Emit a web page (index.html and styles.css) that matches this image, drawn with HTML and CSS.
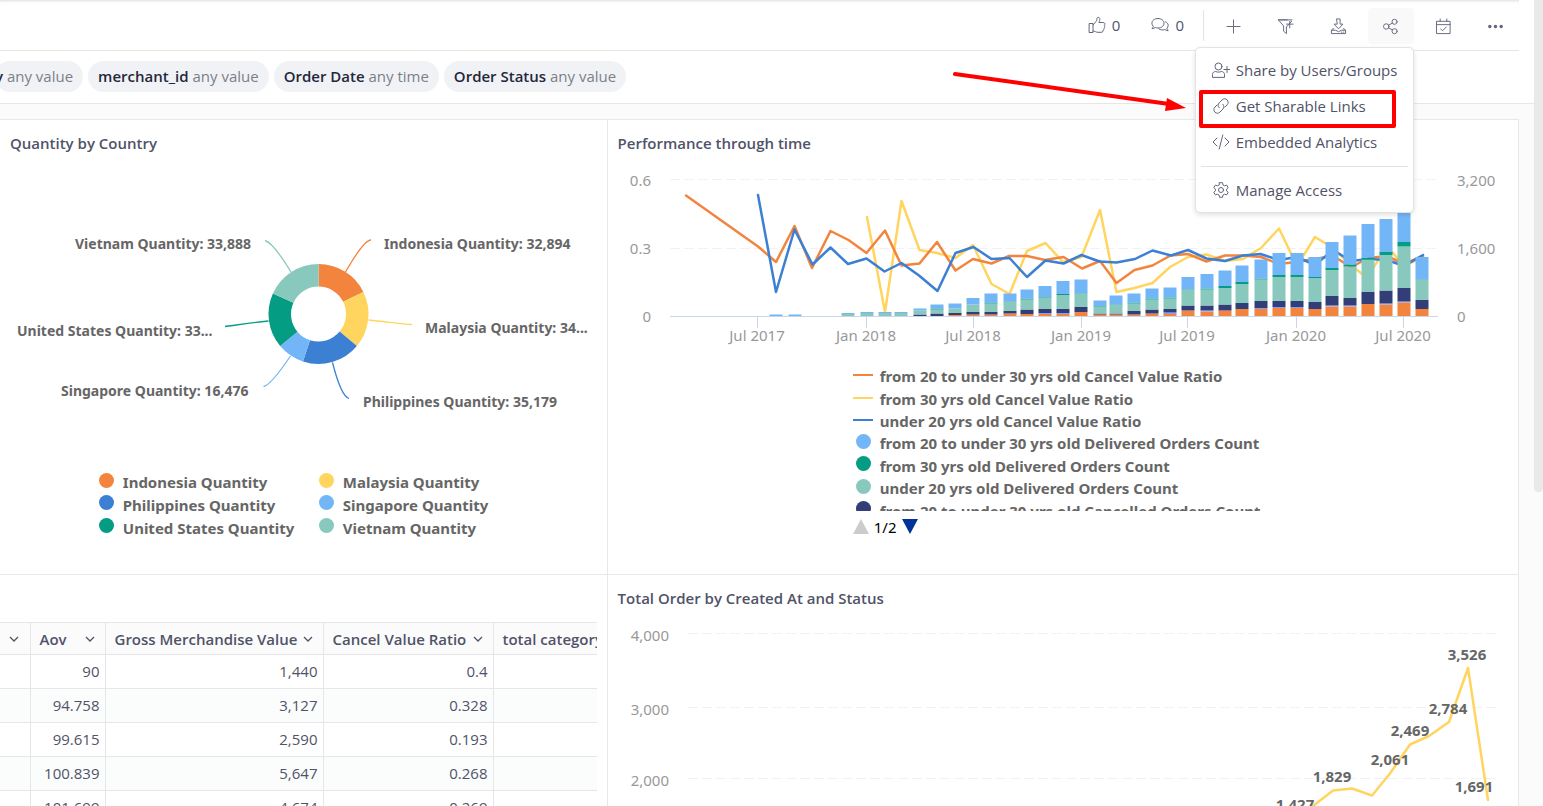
FILE: index.html
```html
<!DOCTYPE html>
<html lang="en">
<head>
  <meta charset="UTF-8">
  <meta name="viewport" content="width=device-width, initial-scale=1">
  <title>Dashboard</title>
  <link rel="stylesheet" href="styles.css">
</head>
<body>
  <main class="page">
    <header class="topbar">
      <button type="button" class="count-btn" aria-label="Likes">
        <svg class="icon" viewBox="0 0 18 18"><path d="M1.500 7.500h3.500v9h-3.500zM5 9l3-3.500c1-1.200.8-2 1-3.300.2-1.200 2.300-1.200 2.700.3.300 1.300-.2 2.600-.8 4h4.200c2 0 2.200 2 1.200 2.800.8.8.6 2-.3 2.500.4.9 0 1.800-.8 2.200.1 1.300-.6 2.300-2.200 2.300h-3c-2 0-3-1.300-5-1.300"/></svg>
        <span>0</span>
      </button>
      <button type="button" class="count-btn" aria-label="Comments">
        <svg class="icon" viewBox="0 0 18 18"><path d="M7 2.500c3.500 0 6 2 6 4.700s-2.500 4.800-6 4.800c-1 0-1.900-.2-2.700-.5-.9.700-1.900 1.200-3.300 1.200.7-.8 1.200-1.600 1.300-2.500-.9-.8-1.400-1.900-1.400-3 0-2.700 2.600-4.700 6.100-4.700zM14.500 5.800c1.700.7 2.700 2 2.700 3.500 0 1.100-.5 2.100-1.300 2.900.1.900.6 1.700 1.300 2.500-1.400 0-2.400-.5-3.300-1.200-2 .8-4.200.5-5.900-.5"/></svg>
        <span>0</span>
      </button>
      <div class="tools">
        <button type="button" class="tool" aria-label="Add"><svg class="icon" viewBox="0 0 18 18"><path d="M9 2v14M2 9h14"/></svg></button>
        <button type="button" class="tool" aria-label="Add filter"><svg class="icon" viewBox="0 0 18 18"><path d="M11 2H1.500l5.500 6.500v5.500l3 2.500v-7M1.500 2h14.500M10 6.500h7M13.500 3.500v7M10.500 9l5-5.500"/></svg></button>
        <button type="button" class="tool" aria-label="Download"><svg class="icon" viewBox="0 0 18 18"><path d="M7.300 1h3.400v5.500h3L9 11.500 4.300 6.500h3zM4 11.500H3l-1.500 1.500v3.500h15V13l-1.500-1.500h-1M1.500 13h4.500l3 1.500 3-1.500h4.500M12 15h.6M14.300 15h.4"/></svg></button>
        <div class="share">
          <button type="button" class="tool tool-active" aria-label="Share" aria-expanded="true"><svg class="icon" viewBox="0 0 18 18"><circle cx="4.500" cy="9" r="2.900"/><circle cx="13.300" cy="4" r="2.700"/><circle cx="13.300" cy="14" r="2.700"/><path d="M7 7.600l4-2.200M7 10.400l4 2.200"/></svg></button>
          <div class="menu">
            <button type="button" class="menu-item">
              <svg class="icon" viewBox="0 0 18 18"><circle cx="6.500" cy="5.500" r="3.500"/><path d="M.5 16v-2.500c0-2 1.500-3 3.200-3 1 .5 1.800.6 2.800.6s1.800-.1 2.800-.6c1.700 0 3.200 1 3.200 3V16zM12 8.500h6M15 5.500v6"/></svg>
              Share by Users/Groups
            </button>
            <button type="button" class="menu-item menu-item-marked">
              <svg class="icon" viewBox="0 0 18 18"><path d="M7.200 10.800c-1.500-1.500-1.500-3.500-.1-4.900l3-3c1.500-1.500 3.600-1.500 5 0s1.400 3.500 0 5l-2.100 2.100M10.800 7.200c1.500 1.500 1.500 3.500.1 4.900l-3 3c-1.500 1.500-3.600 1.500-5 0s-1.400-3.500 0-5L5 8"/></svg>
              Get Sharable Links
              <svg class="arrow" viewBox="0 0 236 40" aria-hidden="true"><path class="arrow-line" d="M4 5L218 35"/><path class="arrow-head" d="M216 29L235 39L214 42z"/></svg>
            </button>
            <button type="button" class="menu-item">
              <svg class="icon" viewBox="0 0 18 18"><path d="M5 5L1 9l4 4M13 5l4 4-4 4M10.800 2L7.200 16"/></svg>
              Embedded Analytics
            </button>
            <hr class="menu-line">
            <button type="button" class="menu-item">
              <svg class="icon" viewBox="0 0 18 18"><circle cx="9" cy="9" r="2.500"/><path d="M7.500 1.700h3l.5 2.300 1.500.8 2.200-.7 1.500 2.600-1.700 1.500v1.600l1.700 1.500-1.500 2.600-2.200-.7-1.500.8-.5 2.300h-3L7 14l-1.500-.8-2.200.7-1.500-2.600 1.700-1.500V8.200L1.800 6.700l1.500-2.600 2.200.7L7 4z"/></svg>
              Manage Access
            </button>
          </div>
        </div>
        <button type="button" class="tool" aria-label="Schedule"><svg class="icon" viewBox="0 0 18 18"><path d="M2 3.500h14v13H2zM2 7h14M5.500 1v2.500M12.500 1v2.500M6 11.500l2 2 4-4"/></svg></button>
        <button type="button" class="tool" aria-label="More"><svg class="icon icon-fill" viewBox="0 0 18 18"><circle cx="3" cy="9" r="1.800"/><circle cx="9" cy="9" r="1.800"/><circle cx="15" cy="9" r="1.800"/></svg></button>
      </div>
    </header>

    <div class="filters">
      <button type="button" class="pill pill-cut"><b>y</b> any value</button>
      <button type="button" class="pill"><b>merchant_id</b> any value</button>
      <button type="button" class="pill"><b>Order Date</b> any time</button>
      <button type="button" class="pill"><b>Order Status</b> any value</button>
    </div>

    <div class="board">
      <section class="card">
        <h2>Quantity by Country</h2>
        <svg class="chart pie-chart" id="pieChart" viewBox="0 168 597 290" preserveAspectRatio="xMinYMin meet"></svg>
        <ul class="legend pie-legend">
          <li><i class="dot orange"></i>Indonesia Quantity</li>
          <li><i class="dot yellow"></i>Malaysia Quantity</li>
          <li><i class="dot blue"></i>Philippines Quantity</li>
          <li><i class="dot sky"></i>Singapore Quantity</li>
          <li><i class="dot green"></i>United States Quantity</li>
          <li><i class="dot teal"></i>Vietnam Quantity</li>
        </ul>
      </section>

      <section class="card">
        <h2>Performance through time</h2>
        <svg class="chart perf-chart" id="perfChart" viewBox="608 168 900 186" preserveAspectRatio="xMinYMin meet"></svg>
        <div class="perf-legend">
          <div class="legend-window">
            <ul class="legend">
              <li><i class="dash orange"></i>from 20 to under 30 yrs old Cancel Value Ratio</li>
              <li><i class="dash yellow"></i>from 30 yrs old Cancel Value Ratio</li>
              <li><i class="dash blue"></i>under 20 yrs old Cancel Value Ratio</li>
              <li><i class="dot sky"></i>from 20 to under 30 yrs old Delivered Orders Count</li>
              <li><i class="dot green"></i>from 30 yrs old Delivered Orders Count</li>
              <li><i class="dot teal"></i>under 20 yrs old Delivered Orders Count</li>
              <li><i class="dot navy"></i>from 20 to under 30 yrs old Cancelled Orders Count</li>
            </ul>
          </div>
          <div class="pager">
            <button type="button" class="up" aria-label="Previous page"></button>
            <span>1/2</span>
            <button type="button" class="down" aria-label="Next page"></button>
          </div>
        </div>
      </section>

      <section class="card">
        <div class="table-wrap">
          <table>
            <colgroup><col class="col-cut"><col class="col-aov"><col class="col-gmv"><col class="col-ratio"><col></colgroup>
            <thead>
              <tr>
                <th><div class="head"><svg class="chev" viewBox="0 0 10 6"><path d="M1 1l4 4 4-4"/></svg></div></th>
                <th><div class="head">Aov<svg class="chev" viewBox="0 0 10 6"><path d="M1 1l4 4 4-4"/></svg></div></th>
                <th><div class="head">Gross Merchandise Value<svg class="chev" viewBox="0 0 10 6"><path d="M1 1l4 4 4-4"/></svg></div></th>
                <th><div class="head">Cancel Value Ratio<svg class="chev" viewBox="0 0 10 6"><path d="M1 1l4 4 4-4"/></svg></div></th>
                <th><div class="head">total category</div></th>
              </tr>
            </thead>
            <tbody>
              <tr><td></td><td>90</td><td>1,440</td><td>0.4</td><td></td></tr>
              <tr><td></td><td>94.758</td><td>3,127</td><td>0.328</td><td></td></tr>
              <tr><td></td><td>99.615</td><td>2,590</td><td>0.193</td><td></td></tr>
              <tr><td></td><td>100.839</td><td>5,647</td><td>0.268</td><td></td></tr>
              <tr><td></td><td>101.699</td><td>4,674</td><td>0.269</td><td></td></tr>
            </tbody>
          </table>
        </div>
      </section>

      <section class="card">
        <h2>Total Order by Created At and Status</h2>
        <svg class="chart order-chart" id="orderChart" viewBox="608 623 900 200" preserveAspectRatio="xMinYMin meet"></svg>
      </section>
    </div>
  </main>
  <div class="scrollbar"><div class="thumb"></div></div>
  <script src="charts.js"></script>
</body>
</html>
```
FILE: styles.css
```css
*, *::after { box-sizing: border-box; }
body { margin: 0; height: 100vh; display: flex; overflow: hidden; background: #fff; color: #505368; font-family: "Open Sans", "Noto Sans", sans-serif; font-size: 15px; }
button { font: inherit; color: inherit; background: none; border: 0; padding: 0; cursor: pointer; }
.page { flex: 1; min-width: 0; height: 100%; display: flex; flex-direction: column; }
.icon { width: 18px; height: 18px; flex: none; fill: none; stroke: #62667c; stroke-width: 1; stroke-linecap: round; stroke-linejoin: round; }
.icon-fill { fill: #62667c; stroke: none; }

/* top bar */
.topbar { flex: none; height: 51px; margin-right: 15px; display: flex; align-items: center; justify-content: flex-end; border-bottom: 1px solid #e6e6e6; box-shadow: inset 0 3px 3px -2px #ddd; }
.count-btn { display: flex; align-items: center; gap: 6px; margin-right: 31px; }
.count-btn + .count-btn { margin-right: 19px; }
.tools { width: 316px; height: 31px; padding: 2px 0 0 6px; display: flex; align-items: center; justify-content: space-between; border-left: 1px solid #e2e3e8; }
.tool { width: 46px; height: 36px; display: flex; align-items: center; justify-content: center; border-radius: 4px; }
.tool .icon { width: 17px; height: 17px; }
.tool-active { background: #f9f9fa; }

/* share menu */
.share { position: relative; }
.menu { position: absolute; z-index: 5; top: 39px; right: 0; width: 219px; padding: 4px 5px; background: #fff; border: 1px solid #e3e3e3; border-radius: 5px; box-shadow: 0 2px 5px rgba(0,0,0,0.12); }
.menu-item { position: relative; width: 100%; height: 36px; padding: 0 11px; display: flex; align-items: center; gap: 6px; white-space: nowrap; }
.menu-line { height: 1px; margin: 6px 0 5px; border: 0; background: #e2e3e8; }
.menu-item-marked::after { content: ""; position: absolute; top: 2px; left: -2px; right: 12px; height: 38px; border: 4px solid #f00; border-radius: 2px; }
.arrow { position: absolute; top: -19px; right: 221px; width: 236px; height: 40px; overflow: visible; }
.arrow-line { stroke: #f00; stroke-width: 4; stroke-linecap: round; }
.arrow-head { fill: #f00; }

/* filters */
.filters { flex: none; height: 53px; padding-bottom: 2px; display: flex; align-items: center; gap: 5px; border-bottom: 1px solid #e6e6e6; overflow: hidden; }
.pill { height: 31px; padding: 0 10px; border-radius: 16px; background: #f1f2f6; color: #7d7f87; white-space: nowrap; }
.pill b { font-weight: 600; color: #24273a; }
.pill-cut { margin-left: -5px; padding-left: 0; }

/* dashboard grid */
.board { flex: 1; min-height: 0; padding: 15px 15px 0 0; display: grid; grid-template-columns: 2fr 3fr; grid-template-rows: 455px 1fr; background: #fbfbfb; overflow: hidden; }
.card { min-width: 0; min-height: 0; overflow: hidden; background: #fff; border-top: 1px solid #e8e8e8; border-right: 1px solid #e8e8e8; }
.card h2 { margin: 0; padding: 0 10px 2px; font-size: 15px; font-weight: 600; line-height: 46px; color: #505368; }
.chart { display: block; width: 100%; font-family: "Noto Sans", sans-serif; font-size: 15px; }
.pie-chart { height: 290px; font-size: 14px; }
.perf-chart { height: 186px; }
.order-chart { height: 200px; }
.chart .label { font-weight: 700; fill: #666; }
.chart .axis-text { fill: #999; }
.chart .grid-line { stroke: #f2f2f4; stroke-dasharray: 10 4; }
.chart .axis-line { stroke: #ccd6eb; }
.chart .line { fill: none; stroke-width: 2.500; stroke-linejoin: round; stroke-linecap: round; }

/* legends */
.legend { margin: 0; padding: 0; list-style: none; display: grid; grid-auto-rows: 1fr; font-family: "Noto Sans", sans-serif; font-size: 15px; font-weight: 700; color: #666; }
.legend li { display: flex; align-items: center; line-height: 22px; white-space: nowrap; }
.dot { width: 15px; height: 15px; margin: 0 9px 4px 3px; border-radius: 50%; }
.dash { width: 20px; height: 2px; margin: 0 7px 2px 0; }
.orange { background: #f2843e; }
.yellow { background: #ffd55f; }
.blue { background: #3b80d3; }
.sky { background: #73b6f7; }
.green { background: #049d83; }
.teal { background: #89c9bd; }
.navy { background: #313e77; }
.pie-legend { width: 465px; height: 68px; margin: 13px auto 0; padding-left: 25px; grid-template-columns: 1fr 1fr; }
.perf-legend { width: 420px; margin: 11px auto 0; }
.legend-window { height: 146px; overflow: hidden; }
.legend-window .legend { height: 157px; }
.pager { height: 31px; display: flex; align-items: center; gap: 5px; font-family: "Noto Sans", sans-serif; color: #000; }
.up { border: 8px solid transparent; border-top: 0; border-bottom: 15px solid #ccc; }
.down { border: 8px solid transparent; border-bottom: 0; border-top: 15px solid #039; }

/* table */
.table-wrap { margin: 47px 10px 0 0; overflow: hidden; }
table { width: 100%; table-layout: fixed; border-collapse: collapse; }
.col-cut { width: 30px; }
.col-aov { width: 75px; }
.col-gmv { width: 218px; }
.col-ratio { width: 170px; }
th, td { height: 34px; padding: 0 5px 2px 9px; border: 1px solid #e6e6e8; border-left: 0; font-weight: 400; text-align: right; white-space: nowrap; overflow: hidden; }
th { height: 32px; padding-bottom: 0; background: #fbfbfc; font-weight: 600; }
th:last-child, td:last-child { border-right: 0; }
tbody tr:nth-child(even) { background: #fbfcfc; }
.head { display: flex; align-items: center; justify-content: space-between; padding-right: 5px; }
.chev { width: 10px; height: 6px; flex: none; fill: none; stroke: #505368; stroke-width: 1.300; }

/* scrollbar */
.scrollbar { flex: none; width: 9px; background: #fbfbfb; }
.thumb { height: 61%; background: #e9e9e9; border-radius: 0 0 4px 4px; }
```
FILE: charts.js
```js
var NS = 'http://www.w3.org/2000/svg';
var C = { orange: '#f2843e', yellow: '#ffd55f', blue: '#3b80d3', sky: '#73b6f7', green: '#049d83', teal: '#89c9bd', navy: '#313e77', purple: '#8b9cf5' };

function add(parent, tag, attrs, text) {
  var el = document.createElementNS(NS, tag);
  for (var k in attrs) el.setAttribute(k, attrs[k]);
  if (text) el.textContent = text;
  parent.appendChild(el);
  return el;
}

function hline(svg, x1, x2, y, cls) {
  add(svg, 'line', { x1: x1, x2: x2, y1: y + 0.5, y2: y + 0.5, 'class': cls });
}

// donut
function drawPie() {
  var svg = document.getElementById('pieChart');
  var cx = 318.5, cy = 314, R = 50, r = 27.5;
  var slices = [[32894, C.orange], [34012, C.yellow], [35179, C.blue], [16476, C.sky], [33100, C.green], [33888, C.teal]];
  var total = slices.reduce(function(s, d) { return s + d[0]; }, 0);
  var a = 0;
  function pt(rad, ang) { return (cx + rad * Math.sin(ang)) + ' ' + (cy - rad * Math.cos(ang)); }
  slices.forEach(function(d) {
    var b = a + d[0] / total * Math.PI * 2;
    add(svg, 'path', { fill: d[1], d: 'M' + pt(R, a) + 'A50 50 0 0 1 ' + pt(R, b) + 'L' + pt(r, b) + 'A27.5 27.5 0 0 0 ' + pt(r, a) + 'Z' });
    a = b;
  });
  [
    ['M371 240C366 240 357 252 345.5 272', C.orange],
    ['M412 324.500C407 324.500 388 322 368.500 320', C.yellow],
    ['M349 398.500C344 397 338 384 332.500 362.500', C.blue],
    ['M263.500 386.500C269 386 279 373 290.500 356', C.sky],
    ['M225 326.500C230 326 249 323 268.500 321', C.green],
    ['M265 240.500C271 242 280 254 291 272', C.teal]
  ].forEach(function(d) { add(svg, 'path', { d: d[0], fill: 'none', stroke: d[1], 'stroke-width': 1.3 }); });
  [
    [75, 249, 'Vietnam Quantity: 33,888'], [384, 249, 'Indonesia Quantity: 32,894'],
    [17, 336, 'United States Quantity: 33...'], [425, 333, 'Malaysia Quantity: 34...'],
    [61, 396, 'Singapore Quantity: 16,476'], [363, 407, 'Philippines Quantity: 35,179']
  ].forEach(function(d) { add(svg, 'text', { x: d[0], y: d[1], 'class': 'label' }, d[2]); });
}

// lines + stacked bars
function drawPerf() {
  var svg = document.getElementById('perfChart');
  hline(svg, 670, 1438, 179, 'grid-line');
  hline(svg, 670, 1438, 248, 'grid-line');
  [
    ['yellow', '867,217 885,312 901.5,201 919.5,250 937,253 955.5,258 973,245 991.5,284 1009.5,294 1027,251 1045.5,243 1063,262 1081.5,257 1100,210 1116.5,292 1134.5,288 1152.5,283 1170,267 1188,257 1206.5,254.5 1225,261 1243,259 1261,248 1279,228.5 1297,266 1315,237 1333,248 1351,265 1367,278 1387,246 1404,266 1423,257'],
    ['orange', '686,195.5 758,246.5 776,262 794.5,226 812,268 830.5,231 848.5,240 866.5,253 885,230.5 901.5,265.5 919.5,263.5 937,242 955.5,270.5 973,259 991.5,263.5 1009,256 1027,256 1045,260 1063.5,257 1082,268.5 1100,261 1116.5,283 1134.5,270 1152.5,265.5 1170.5,255.5 1188,254 1206.5,261.5 1225,255.5 1243,255.5 1261,257 1279,264 1296,262 1314,259 1333,256 1351,267 1369,258 1387,256 1404,264 1423,256'],
    ['blue', '758,195 776,292 794.5,229.5 812.5,264.5 830.5,247.5 848,264 866.5,258.5 884.5,271.5 901.5,263 919,275.5 937.5,291 955.5,253 973.5,247 991.5,259 1009.5,258 1027,277 1045.5,260.5 1063.5,263.5 1081.5,255 1099.5,261.5 1116.5,262.5 1135,259 1152.5,250.5 1171,255.5 1188,250 1206.5,258.5 1225,261 1243,255.5 1260.5,254 1279,260 1297,257 1315,265 1333,250 1351,261 1369,259 1387,260 1404,266 1423,255']
  ].forEach(function(d) { add(svg, 'polyline', { points: d[1], stroke: C[d[0]], 'class': 'line' }); });

  // x, then heights: orange, purple, navy, teal, green, sky
  var keys = ['orange', 'purple', 'navy', 'teal', 'green', 'sky'];
  [
    [776, 0, 0, 0, 0, 0, 1.5], [795, 0, 0, 0, 0, 0, 1.5], [848, 0, 0, 0, 2, 0, 1], [867, 0, 0, 0, 3, 0, 1],
    [885, 0, 0, 0, 3, 0, 1], [901, 0, 0, 0, 3, 0, 1], [920, 0, 0, 1.5, 4, 0, 2], [937, 0, 0, 2.5, 4, 1, 4],
    [955, 1, 0, 2, 4.5, 0, 5], [973, 1.5, 0, 2.5, 7.5, 0, 6.5], [991, 1.5, 0, 2.5, 8.5, 1, 9], [1010, 2.5, 0, 2.5, 9, 0.5, 8],
    [1027, 2, 0, 4.5, 10, 1, 9], [1045, 2, 1, 4, 11.5, 0.5, 11], [1063, 2, 1, 4, 14, 1, 13], [1081, 4, 0, 5, 13, 0.5, 14],
    [1100, 1.5, 0, 1, 7, 0.5, 5.5], [1116, 1.5, 0, 1, 8.5, 0.5, 9], [1134, 1.5, 0, 3.5, 7.5, 1, 9], [1152, 2.5, 0, 4, 10, 1, 10],
    [1170, 2, 1.5, 3.5, 10.5, 1, 10], [1188, 5.5, 0, 5, 15.5, 0.5, 12.5], [1207, 4.5, 1, 5, 16, 1, 14.5], [1225, 5.5, 0, 6, 16.5, 2, 15.5],
    [1242, 7, 0, 6, 19, 2, 16.5], [1261, 7, 1, 7, 21.5, 1, 19], [1279, 8, 1, 6, 24, 2, 22], [1297, 8, 1, 6, 24, 2, 22],
    [1315, 7, 0, 7, 24, 1, 20], [1332, 9.5, 1, 9.5, 26, 2, 26], [1350, 9.5, 1, 7.5, 31.5, 2, 29], [1368, 12, 0, 12, 32.5, 2, 33.5],
    [1386, 11.5, 1, 13, 35.5, 3, 33], [1404, 13.5, 1, 13.5, 41.5, 4.5, 33], [1422, 7, 0, 9, 20, 0.5, 22.5]
  ].forEach(function(b) {
    var y = 316;
    keys.forEach(function(k, i) {
      var h = b[i + 1];
      if (!h) return;
      y -= h;
      add(svg, 'rect', { x: b[0] - 6.5, y: y, width: 13, height: h, fill: C[k] });
    });
  });

  hline(svg, 670, 1438, 316, 'axis-line');
  [[757, 'Jul 2017'], [866, 'Jan 2018'], [973, 'Jul 2018'], [1081, 'Jan 2019'], [1187, 'Jul 2019'], [1296, 'Jan 2020'], [1403, 'Jul 2020']].forEach(function(d) {
    add(svg, 'line', { x1: d[0] + 0.5, x2: d[0] + 0.5, y1: 316, y2: 328, 'class': 'axis-line' });
    add(svg, 'text', { x: d[0], y: 341, 'text-anchor': 'middle', 'class': 'axis-text' }, d[1]);
  });
  [[186, '0.6', '3,200'], [254, '0.3', '1,600'], [322, '0', '0']].forEach(function(d) {
    add(svg, 'text', { x: 651, y: d[0], 'text-anchor': 'end', 'class': 'axis-text' }, d[1]);
    add(svg, 'text', { x: 1457, y: d[0], 'class': 'axis-text' }, d[2]);
  });
}

function drawOrders() {
  var svg = document.getElementById('orderChart');
  [[633, '4,000'], [707, '3,000'], [778, '2,000']].forEach(function(d) {
    hline(svg, 688, 1496, d[0], 'grid-line');
    add(svg, 'text', { x: 669, y: d[0] + 8, 'text-anchor': 'end', 'class': 'axis-text' }, d[1]);
  });
  add(svg, 'polyline', { points: '1295,818 1313,806 1333,790.5 1352,788.5 1372,795.5 1390,773.5 1410,744.5 1429,736 1449,722 1468,668 1488,800', stroke: C.yellow, 'class': 'line' });
  [[1295, 810, '1,427'], [1332, 782, '1,829'], [1390, 765, '2,061'], [1410, 736, '2,469'], [1448, 714, '2,784'], [1467, 660, '3,526'], [1474, 792, '1,691']].forEach(function(d) {
    add(svg, 'text', { x: d[0], y: d[1], 'text-anchor': 'middle', 'class': 'label' }, d[2]);
  });
}

drawPie();
drawPerf();
drawOrders();
```
